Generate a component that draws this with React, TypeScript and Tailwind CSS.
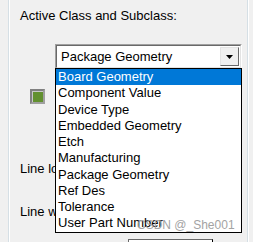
import React from "react";

const items = [
  "Board Geometry",
  "Component Value",
  "Device Type",
  "Embedded Geometry",
  "Etch",
  "Manufacturing",
  "Package Geometry",
  "Ref Des",
  "Tolerance",
  "User Part Number",
];

export default function App() {
  return (
    <div
      className="relative w-[253px] h-[242px] overflow-hidden bg-[#f0f0f0] text-[13px] text-black"
      style={{ fontFamily: '"Liberation Sans", Arial, sans-serif' }}
    >
      <div className="absolute left-[8px] top-0 h-full w-[1px] bg-[#d5dfe5]" />
      <div className="absolute left-[9px] top-0 h-full w-[1px] bg-white" />
      <div className="absolute left-[247px] top-0 h-full w-[1px] bg-[#d5dfe5]" />
      <div className="absolute left-[248px] top-0 h-full w-[1px] bg-white" />

      <div className="flex flex-col pl-[20px] pt-[8px]">
        <div className="leading-[15px]">Active Class and Subclass:</div>
        <div className="ml-[35px] mt-[21px] flex h-[25px] w-[187px] border border-t-[#a0a0a0] border-l-[#a0a0a0] border-r-white border-b-white">
          <div className="flex flex-1 items-center border border-t-[#696969] border-l-[#696969] border-r-[#e3e3e3] border-b-[#e3e3e3] bg-white pl-[4px]">
            <span className="flex-1 leading-[15px]">Package Geometry</span>
            <div className="mr-[1px] flex h-[19px] w-[19px] items-center justify-center border border-t-[#e3e3e3] border-l-[#e3e3e3] border-r-[#696969] border-b-[#696969] bg-[#f0f0f0]">
              <svg width="7" height="4" viewBox="0 0 7 4">
                <path d="M0 0H7L3.5 4Z" fill="#000" />
              </svg>
            </div>
          </div>
        </div>
        <div className="ml-[10px] mt-[20px] flex h-[15px] w-[15px] items-center justify-center border-2 border-t-[#808080] border-l-[#808080] border-r-[#a0a0a0] border-b-[#a0a0a0] bg-[#c8c8c8]">
          <div className="h-[10px] w-[10px] bg-[#62902f]" />
        </div>
        <div className="mt-[57px] leading-[15px]">Line lock:</div>
        <div className="mt-[28px] leading-[15px]">Line width:</div>
        <div className="ml-[108px] mt-[20px] h-[20px] w-[85px] border border-t-[#696969] border-l-[#696969] bg-white" />
      </div>

      <div className="absolute left-[55px] top-[68px] w-[187px] border border-black bg-white">
        {items.map((it, i) => (
          <div
            key={it}
            className={
              "h-[16.25px] pl-[2px] leading-[16.25px] whitespace-nowrap " +
              (i === 0 ? "bg-[#0078d7] text-white" : "text-black")
            }
          >
            {it}
          </div>
        ))}
      </div>
      <div className="absolute left-[137px] top-[218px] text-[12px] leading-[15px] text-[#a3a3a3]">
        CSDN @_She001
      </div>
    </div>
  );
}
